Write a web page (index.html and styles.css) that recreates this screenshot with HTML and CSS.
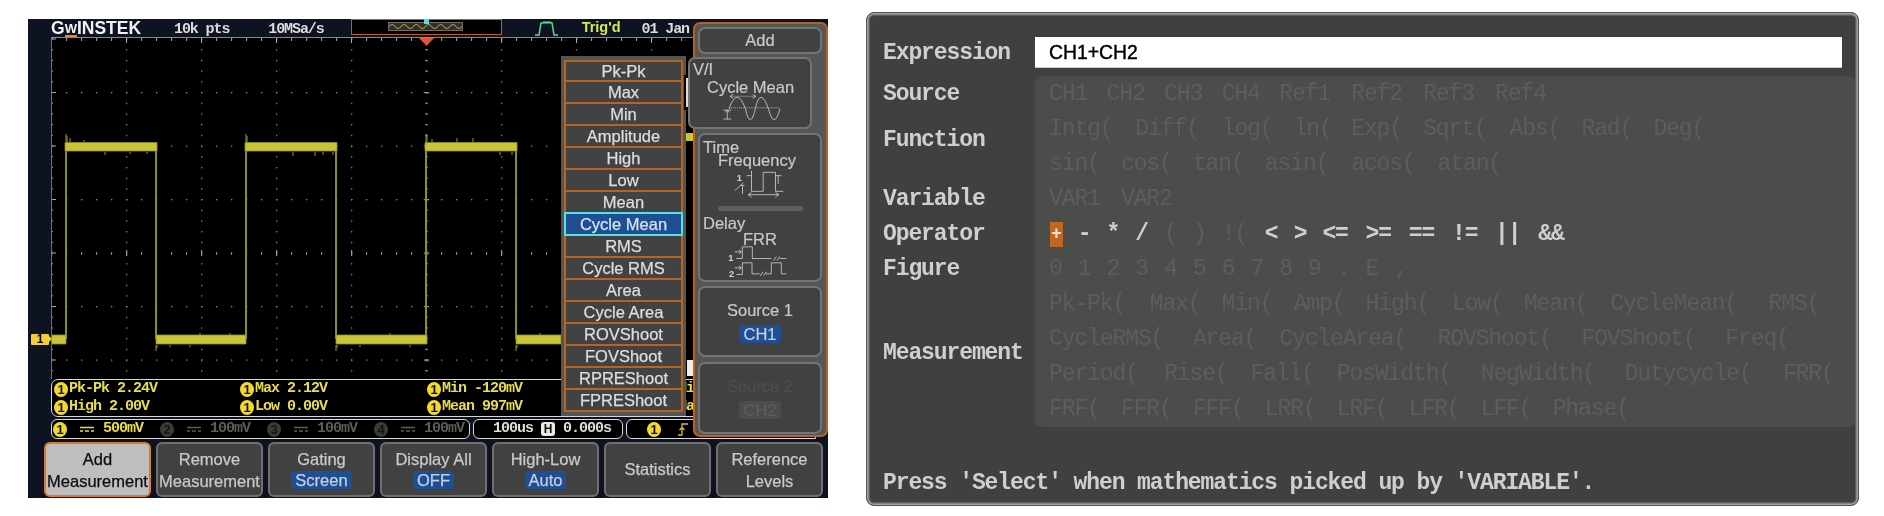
FILE: index.html
```html
<!DOCTYPE html>
<html lang="en">
<head>
<meta charset="utf-8">
<title>Math measurement</title>
<link rel="stylesheet" href="styles.css">
</head>
<body>
<main class="page">
  <section class="scope">
    <header class="topbar">
      <span class="logo">G<span class="logo-w">W</span>INSTEK</span>
      <span class="top-text pts">10k pts</span>
      <span class="top-text rate">10MSa/s</span>
      <div class="membar">
        <div class="memwin">
          <svg class="memwave" viewBox="0 0 72 6"><path d="M0 3q3-4 6 0t6 0 6 0 6 0 6 0 6 0 6 0 6 0 6 0 6 0 6 0 6 0"/></svg>
          <span class="memtrig"></span>
        </div>
      </div>
      <svg class="pulse" viewBox="0 0 23 15"><path d="M0 14H4L6 2H8L9 1 10 2 11 1 12 2 13 1 14 2 15 1 16 2H17L19 14H23"/></svg>
      <span class="trigd">Trig'd</span>
      <span class="top-text date">01 Jan</span>
    </header>

    <div class="plot">
      <svg class="plot-svg" viewBox="51 37 777 342">
        <defs>
          <pattern id="dotsH" x="51" y="38.5" width="15" height="53.5" patternUnits="userSpaceOnUse"><rect width="1.3" height="1.3" fill="#8c8c8c"/></pattern>
          <pattern id="dotsV" x="51" y="38.5" width="75" height="10.7" patternUnits="userSpaceOnUse"><rect width="1.3" height="1.3" fill="#8c8c8c"/></pattern>
          <pattern id="ticksTop" x="51" y="38" width="15" height="10" patternUnits="userSpaceOnUse"><rect width="1" height="3" fill="#999"/></pattern>
          <pattern id="majorTop" x="51" y="38" width="75" height="10" patternUnits="userSpaceOnUse"><rect width="1" height="5" fill="#aaa"/></pattern>
          <pattern id="ticksLeft" x="51" y="38.5" width="10" height="10.7" patternUnits="userSpaceOnUse"><rect width="2" height="1" fill="#999"/></pattern>
          <pattern id="majorLeft" x="51" y="38.5" width="10" height="53.5" patternUnits="userSpaceOnUse"><rect width="5" height="1" fill="#aaa"/></pattern>
          <pattern id="ticksAxis" x="425" y="38.5" width="10" height="10.7" patternUnits="userSpaceOnUse"><rect width="3" height="1" fill="#888"/></pattern>
          <pattern id="majorAxis" x="423.500" y="38.5" width="10" height="53.5" patternUnits="userSpaceOnUse"><rect width="6" height="1.2" fill="#999"/></pattern>
          <pattern id="ticksMid" x="51" y="252" width="15" height="10" patternUnits="userSpaceOnUse"><rect width="1" height="3" fill="#888"/></pattern>
          <pattern id="majorMid" x="51" y="250" width="75" height="10" patternUnits="userSpaceOnUse"><rect width="1.2" height="6" fill="#999"/></pattern>
        </defs>
        <rect x="51" y="37" width="777" height="342" fill="url(#dotsH)"/>
        <rect x="51" y="37" width="777" height="342" fill="url(#dotsV)"/>
        <rect x="51" y="38" width="777" height="5" fill="url(#ticksTop)"/>
        <rect x="51" y="38" width="777" height="6" fill="url(#majorTop)"/>
        <rect x="51" y="38" width="2" height="341" fill="url(#ticksLeft)"/>
        <rect x="51" y="38" width="5" height="341" fill="url(#majorLeft)"/>
        <rect x="425" y="38" width="3" height="341" fill="url(#ticksAxis)"/>
        <rect x="423.500" y="38" width="6" height="341" fill="url(#majorAxis)"/>
        <rect x="51" y="252" width="777" height="3" fill="url(#ticksMid)"/>
        <rect x="51" y="250" width="777" height="6" fill="url(#majorMid)"/>

        <path class="edge" d="M66 147V339M156 147V339M246 147V339M336 147V339M426 147V339M516 147V339"/>
        <path class="band" d="M65 142.500H157V151H65ZM245 142.500H337V151H245ZM425 142.500H517V151H425Z"/>
        <path class="band" d="M51 335H66V344H51ZM156 335H246V344H156ZM336 335H427V344H336ZM516 335H561V344H516Z"/>
        <path class="noise" d="M66 134V142M67 136V142M70 138V142M84 140V142M105 152V155M130 152V154M147 152V154M246 134V142M247 136V142M293 152V156M315 152V156M323 152V155M333 152V155M426 134V142M427 136V142M432 139V142M457 138V142M473 138V142M500 152V155M512 152V155M156 345V351M157 345V348M336 345V351M337 345V348M516 345V351M517 345V348M200 333V335M230 333V335M390 333V335M540 333V335M170 345V347M190 345V347M360 345V347M410 345V347"/>
        <path class="trigmark" d="M419 38H434L426.5 46Z"/>
      </svg>
      <span class="ch-marker">1</span>
    </div>

    <div class="meas">
      <div class="m"><span class="dot">1</span>Pk-Pk 2.24V</div>
      <div class="m"><span class="dot">1</span>Max 2.12V</div>
      <div class="m"><span class="dot">1</span>Min -120mV</div>
      <div class="m"><span class="dot">1</span>Mid</div>
      <div class="m"><span class="dot">1</span>High 2.00V</div>
      <div class="m"><span class="dot">1</span>Low 0.00V</div>
      <div class="m"><span class="dot">1</span>Mean 997mV</div>
      <div class="m"><span class="dot">1</span>Max</div>
    </div>

    <div class="status">
      <div class="channels">
        <div class="ch"><span class="dot">1</span><svg class="dc" viewBox="0 0 14 7"><path d="M0 1.500H14M0 5H3M5 5H9M11 5H14"/></svg><span class="val">500mV</span></div>
        <div class="ch off"><span class="dot">2</span><svg class="dc" viewBox="0 0 14 7"><path d="M0 1.500H14M0 5H3M5 5H9M11 5H14"/></svg><span class="val">100mV</span></div>
        <div class="ch off"><span class="dot">3</span><svg class="dc" viewBox="0 0 14 7"><path d="M0 1.500H14M0 5H3M5 5H9M11 5H14"/></svg><span class="val">100mV</span></div>
        <div class="ch off"><span class="dot">4</span><svg class="dc" viewBox="0 0 14 7"><path d="M0 1.500H14M0 5H3M5 5H9M11 5H14"/></svg><span class="val">100mV</span></div>
      </div>
      <div class="timebox"><span>100us</span><span class="hbox">H</span><span>0.000s</span></div>
      <div class="trigbox"><span class="dot">1</span><svg class="edge-icon" viewBox="0 0 10 13"><path d="M0 12H4V1H10M1.500 7L4 4.500 6.500 7"/></svg></div>
    </div>

    <nav class="softkeys">
      <div class="key active">Add<br>Measurement</div>
      <div class="key">Remove<br>Measurement</div>
      <div class="key">Gating<span class="badge">Screen</span></div>
      <div class="key">Display All<span class="badge">OFF</span></div>
      <div class="key">High-Low<span class="badge">Auto</span></div>
      <div class="key stat">Statistics</div>
      <div class="key">Reference<br>Levels</div>
    </nav>

    <ul class="popup">
      <li>Pk-Pk</li><li>Max</li><li>Min</li><li>Amplitude</li><li>High</li><li>Low</li><li>Mean</li>
      <li class="sel">Cycle Mean</li>
      <li>RMS</li><li>Cycle RMS</li><li>Area</li><li>Cycle Area</li><li>ROVShoot</li><li>FOVShoot</li><li>RPREShoot</li><li>FPREShoot</li>
    </ul>

    <span class="scroll-mark"></span>
    <span class="yellow-mark"></span>
    <span class="white-mark"></span>

    <aside class="menu">
      <div class="mbtn add">Add</div>
      <div class="mbtn vi">
        <div class="group-title">V/I</div>
        <div class="item-title cm">Cycle Mean</div>
        <svg class="icon icon-sine" viewBox="105 120 180 85">
          <path d="M125 162H280" stroke-dasharray="3 3"/>
          <path d="M130 127H205" stroke-dasharray="3 3"/>
          <path d="M138 121L128 127 138 133M197 121L207 127 197 133"/>
          <path d="M125 165Q150 95 175 165Q190 231 205 165Q220 95 245 165Q262 231 280 165"/>
          <path d="M108 169H132M120 169V196M108 196H132M114 176L120 169 126 176"/>
        </svg>
      </div>
      <div class="mbtn time">
        <div class="group-title">Time</div>
        <div class="item-title freq">Frequency</div>
        <svg class="icon icon-freq" viewBox="135 15 155 90">
          <path d="M175 35H190M190 20V82H225V25H262V82H285M262 35H280M270 35V60"/>
          <path d="M180 92H272M190 85L180 92 190 99M262 85L272 92 262 99"/>
          <path d="M140 80L166 56M157 64H169M163 64V90"/>
          <text x="146" y="50">1</text>
        </svg>
        <div class="divider"></div>
        <div class="group-title delay">Delay</div>
        <div class="item-title frr">FRR</div>
        <svg class="icon icon-frr" viewBox="125 245 180 95">
          <path d="M150 285H168V250H198V285H255M280 285H300M262 291L270 279M272 291L280 279"/>
          <path d="M145 265H165M158 259L165 265 158 271"/>
          <path d="M150 333H168V298H197V331H220M238 331H255V298H285V331H300M222 337L230 325M232 337L240 325"/>
          <path d="M145 313H165M158 307L165 313 158 319"/>
          <text x="126" y="291">1</text>
          <text x="128" y="339">2</text>
        </svg>
      </div>
      <div class="mbtn source">
        <span>Source 1</span><span class="badge">CH1</span>
      </div>
      <div class="mbtn source disabled">
        <span>Source 2</span><span class="badge">CH2</span>
      </div>
    </aside>
  </section>

  <section class="panel">
    <div class="head">
      <div class="label">Expression</div>
      <div class="input">CH1+CH2</div>
    </div>
    <div class="body">
      <div class="labels">
        <div class="label">Source</div>
        <div class="label l-func">Function</div>
        <div class="label">Variable</div>
        <div class="label">Operator</div>
        <div class="label">Figure</div>
        <div class="label l-meas">Measurement</div>
      </div>
      <div class="pane">
        <div class="row"><span class="s4">CH1</span><span class="s4">CH2</span><span class="s4">CH3</span><span class="s4">CH4</span><span class="s5">Ref1</span><span class="s5">Ref2</span><span class="s5">Ref3</span><span class="s5">Ref4</span></div>
        <div class="row"><span class="s6">Intg(</span><span class="s6">Diff(</span><span class="s5">log(</span><span class="s4">ln(</span><span class="s5">Exp(</span><span class="s6">Sqrt(</span><span class="s5">Abs(</span><span class="s5">Rad(</span><span class="s5">Deg(</span></div>
        <div class="row"><span class="s5">sin(</span><span class="s5">cos(</span><span class="s5">tan(</span><span class="s6">asin(</span><span class="s6">acos(</span><span class="s6">atan(</span></div>
        <div class="row"><span class="s5">VAR1</span><span class="s5">VAR2</span></div>
        <div class="row ops"><span class="s2"><b class="pick">+</b></span><span class="s2">-</span><span class="s2">*</span><span class="s2">/</span><span class="s2 dim">(</span><span class="s2 dim">)</span><span class="s3 dim">!(</span><span class="s2">&lt;</span><span class="s2">&gt;</span><span class="s3">&lt;=</span><span class="s3">&gt;=</span><span class="s3">==</span><span class="s3">!=</span><span class="s3">||</span><span class="s3">&amp;&amp;</span></div>
        <div class="row"><span class="s2">0</span><span class="s2">1</span><span class="s2">2</span><span class="s2">3</span><span class="s2">4</span><span class="s2">5</span><span class="s2">6</span><span class="s2">7</span><span class="s2">8</span><span class="s2">9</span><span class="s2">.</span><span class="s2">E</span><span class="s2">,</span></div>
        <div class="row"><span class="s7">Pk-Pk(</span><span class="s5">Max(</span><span class="s5">Min(</span><span class="s5">Amp(</span><span class="s6">High(</span><span class="s5">Low(</span><span class="s6">Mean(</span><span class="s11">CycleMean(</span><span class="s5">RMS(</span></div>
        <div class="row"><span class="s10">CycleRMS(</span><span class="s6">Area(</span><span class="s11">CycleArea(</span><span class="s10">ROVShoot(</span><span class="s10">FOVShoot(</span><span class="s6">Freq(</span></div>
        <div class="row"><span class="s8">Period(</span><span class="s6">Rise(</span><span class="s6">Fall(</span><span class="s10">PosWidth(</span><span class="s10">NegWidth(</span><span class="s11">Dutycycle(</span><span class="s5">FRR(</span></div>
        <div class="row"><span class="s5">FRF(</span><span class="s5">FFR(</span><span class="s5">FFF(</span><span class="s5">LRR(</span><span class="s5">LRF(</span><span class="s5">LFR(</span><span class="s5">LFF(</span><span class="s7">Phase(</span></div>
      </div>
    </div>
    <div class="label hint">Press 'Select' when mathematics picked up by 'VARIABLE'.</div>
  </section>
</main>
</body>
</html>
```
FILE: styles.css
```css
* { box-sizing: border-box; }
html, body { margin: 0; padding: 0; background: #fff; }
body { width: 1884px; height: 516px; overflow: hidden; }

.page {
  display: flex;
  align-items: flex-start;
  padding: 12px 0 0 28px;
  font-family: "Liberation Sans", Arial, sans-serif;
}

/* ---------- oscilloscope ---------- */
.scope {
  position: relative;
  flex: none;
  width: 800px;
  height: 479px;
  margin-top: 7px;
  background: #0e1322;
  overflow: hidden;
  filter: blur(0.45px);
}
.topbar {
  display: flex;
  align-items: center;
  height: 18px;
  padding-left: 23px;
  color: #dcdcdc;
}
.logo {
  flex: none;
  width: 90px;
  font-size: 17.500px;
  font-weight: 700;
  color: #f2f2f2;
  line-height: 18px;
  white-space: nowrap;
}
.logo-w {
  display: inline-block;
  font-size: 13px;
  line-height: 12px;
  height: 14px;
  vertical-align: 1px;
  border-bottom: 2px solid #e8862e;
}
.top-text {
  font: 700 15px/18px "Liberation Mono", monospace;
  letter-spacing: -1.100px;
  white-space: nowrap;
  padding-top: 4px;
}
.pts { margin-left: 33px; }
.rate { margin-left: 39px; }
.membar {
  flex: none;
  width: 151px;
  height: 16px;
  margin: 0 0 3px 27px;
  padding: 2px 0 0 36px;
  border: 1px solid #b8601c;
  background: #000;
}
.memwin {
  position: relative;
  width: 75px;
  height: 9px;
  background: #2e2e2e;
  border: 1px solid #6e6e6e;
}
.memwave { display: block; width: 73px; height: 7px; }
.memwave path { fill: none; stroke: #b39a24; stroke-width: 1; }
.memtrig {
  position: absolute;
  left: 35px;
  top: -4px;
  width: 5px;
  height: 5px;
  background: #57d8e4;
}
.pulse { flex: none; width: 23px; height: 15px; margin: 0 0 0 33px; fill: none; stroke: #63d68c; stroke-width: 1.500; }
.trigd {
  margin-left: 24px;
  font-size: 14.500px;
  font-weight: 700;
  line-height: 18px;
  color: #d6ea50;
  white-space: nowrap;
  position: relative;
  top: -1px;
}
.date { margin-left: 21px; }

.plot {
  position: relative;
  height: 342px;
  margin-left: 23px;
  background: #000;
  border-top: 1px solid #8a8a8a;
}
.plot-svg { display: block; width: 777px; height: 342px; margin-top: -1px; }
.plot::before {
  content: "";
  position: absolute;
  left: 0; top: 0; bottom: 0;
  width: 1px;
  background: #6e6e6e;
}
.edge { fill: none; stroke: #8f8d28; stroke-width: 2; }
.band { fill: #c8c537; stroke: #8f8d28; stroke-width: 0.800; }
.noise { fill: none; stroke: #9d9b2c; stroke-width: 1; }
.trigmark { fill: #e6552b; }
.ch-marker {
  position: absolute;
  left: -20px;
  top: 296px;
  width: 18px;
  height: 11px;
  background: #f0cf3a;
  color: #000;
  font: 700 12px/11px "Liberation Sans", sans-serif;
  text-align: center;
  border-radius: 1px;
}
.ch-marker::after {
  content: "";
  position: absolute;
  left: 18px;
  top: 2px;
  border-left: 3px solid #f0cf3a;
  border-top: 3.500px solid transparent;
  border-bottom: 3.500px solid transparent;
}

.dot {
  flex: none;
  display: inline-block;
  width: 14px;
  height: 15px;
  border-radius: 50%;
  background: #f2d92f;
  color: #111;
  font: 700 13px/15px "Liberation Sans", sans-serif;
  letter-spacing: 0;
  text-align: center;
}

.meas {
  display: grid;
  grid-template-columns: 186px 187px 236px 1fr;
  grid-auto-rows: 18px;
  width: 777px;
  height: 38px;
  margin-left: 23px;
  padding: 0 0 0 2px;
  background: #000;
  border: 1px solid #d9d9d9;
  border-radius: 7px;
}
.m {
  display: flex;
  align-items: center;
  gap: 1px;
  font: 700 15px/18px "Liberation Mono", monospace;
  letter-spacing: -1px;
  color: #e6dc4c;
  white-space: pre;
}

.status {
  display: flex;
  gap: 3px;
  height: 20px;
  margin: 2px 0 0 23px;
  font: 700 15px/18px "Liberation Mono", monospace;
  letter-spacing: -1px;
}
.channels, .timebox, .trigbox {
  display: flex;
  align-items: center;
  background: #000;
  border: 1px solid #d9d9d9;
  border-radius: 6px;
}
.channels { width: 419px; padding-left: 1px; flex: none; }
.ch {
  flex: none;
  width: 107px;
  display: flex;
  align-items: center;
  color: #e6dc4c;
}
.ch.off { color: #5c5c5c; }
.ch.off .dot { background: #3a3a3a; color: #151515; }
.dc { width: 14px; height: 7px; margin-left: 13px; fill: none; stroke: currentColor; stroke-width: 1.500; }
.val { margin-left: 9px; }
.timebox { width: 150px; padding-left: 19px; color: #dedede; flex: none; }
.hbox {
  width: 14px;
  height: 14px;
  margin: 0 8px;
  background: #e8e8e8;
  color: #111;
  border-radius: 3px;
  font: 700 12px/14px "Liberation Sans", sans-serif;
  letter-spacing: 0;
  text-align: center;
}
.trigbox { width: 190px; padding-left: 20px; border-radius: 6px 0 0 6px; flex: none; }
.edge-icon { width: 10px; height: 13px; margin-left: 17px; fill: none; stroke: #e0b93a; stroke-width: 1.300; }

.softkeys {
  display: flex;
  gap: 5px;
  height: 55px;
  margin: 3px 0 0 16px;
}
.key {
  flex: none;
  width: 107px;
  height: 55px;
  padding-top: 4px;
  background: #414141;
  border: 2px solid #707070;
  border-radius: 6px;
  color: #c9c9c9;
  font-size: 16.500px;
  -webkit-text-stroke: 0.25px currentColor;
  line-height: 22px;
  text-align: center;
  white-space: nowrap;
  overflow: visible;
}
.key.active {
  background: #bebebe;
  border-color: #dc7a28;
  color: #0c0c0c;
}
.key.stat { padding-top: 14px; }
.badge {
  display: table;
  margin: 1px auto 0;
  padding: 0 4px;
  height: 18px;
  line-height: 18px;
  background: #1e4e93;
  border-radius: 4px;
  color: #c6d0dd;
}

/* list of measurements */
.popup {
  position: absolute;
  left: 533px;
  top: 37px;
  width: 125px;
  height: 360px;
  margin: 0;
  padding: 4px 3px;
  list-style: none;
  background: #555;
}
.popup li {
  height: 22px;
  background: #424242;
  border: 2px solid #b5651f;
  border-top-width: 0;
  color: #dedede;
  font-size: 16.500px;
  -webkit-text-stroke: 0.25px currentColor;
  line-height: 20px;
  text-align: center;
  white-space: nowrap;
}
.popup li:first-child { border-top-width: 2px; line-height: 19px; }
.popup li.sel {
  position: relative;
  height: 24px;
  margin: -2px 0 0;
  background: #1e4f92;
  border: 2px solid #55dfe8;
  color: #d7e2ee;
  line-height: 20px;
}

.scroll-mark {
  position: absolute;
  left: 656px; top: 56px;
  width: 6px; height: 35px;
  background: #000;
  border-left: 2px solid #000;
}
.scroll-mark::after {
  content: "";
  position: absolute;
  left: 0; top: 3px; bottom: 3px;
  width: 2px;
  background: #ddd;
}
.yellow-mark {
  position: absolute;
  left: 658px; top: 114px;
  width: 8px; height: 8px;
  background: #c9c537;
}
.white-mark {
  position: absolute;
  left: 659px; top: 341px;
  width: 7px; height: 16px;
  background: #ededed;
}

/* right hand menu */
.menu {
  position: absolute;
  left: 665px;
  top: 3px;
  width: 135px;
  height: 415px;
  padding: 3px;
  background: #565656;
  border: 2px solid #b8621e;
  border-radius: 7px;
  color: #c9c9c9;
}
.mbtn {
  position: relative;
  width: 124px;
  background: #414141;
  border: 2px solid #747474;
  border-radius: 7px;
  font-size: 16.500px;
  -webkit-text-stroke: 0.2px currentColor;
}
.add { height: 27px; line-height: 23px; text-align: center; }
.vi { height: 72px; margin: 3px 0 0 -10px; padding-top: 2px; }
.time { height: 149px; margin-top: 4px; padding-top: 4px; }
.group-title { padding-left: 3px; line-height: 16px; }
.item-title { white-space: nowrap; line-height: 18px; }
.cm { margin: 1px 0 0 17px; }
.freq { margin: -4px 0 0 18px; }
.frr { margin: -1px 0 0 43px; }
.icon { display: block; fill: none; stroke: #c9c9c9; stroke-width: 2.600; -webkit-text-stroke: 0; }
.icon text { fill: #d4d4d4; stroke: none; font: 700 28px "Liberation Sans", sans-serif; }
.icon-sine { width: 60px; height: 28px; margin: -2px 0 0 32px; }
.icon-freq { width: 52px; height: 30px; margin: 0 0 0 33px; }
.divider {
  width: 85px;
  height: 5px;
  margin: 7px 0 4px 18px;
  background: #5f5f5f;
  border-radius: 3px;
}
.icon-frr { width: 60px; height: 32px; margin: -3px 0 0 28px; }
.source {
  display: flex;
  flex-direction: column;
  align-items: center;
  height: 71px;
  margin-top: 4px;
  padding-top: 10px;
  line-height: 24px;
}
.source .badge { margin-top: 3px; }
.disabled { height: 72px; margin-top: 5px; color: #4e4e4e; }
.disabled .badge { background: #4c4c4c; color: #5e5e5e; }

/* ---------- math panel ---------- */
.panel {
  flex: none;
  width: 993px;
  height: 494px;
  margin-left: 38px;
  padding: 24px 16px 0;
  background: #404040;
  border: 1px solid #505050;
  border-radius: 8px;
  box-shadow: inset 0 0 0 1.500px #a4a4a4, inset 0 0 0 3px #5e5e5e;
  font: 23px/24px "Liberation Mono", monospace;
  letter-spacing: -1.100px;
  filter: blur(0.4px);
}
.label { font-weight: 700; color: #cfcfcf; white-space: nowrap; }
.head { display: flex; align-items: center; height: 31px; }
.head .label { width: 152px; flex: none; }
.input {
  flex: 1;
  height: 31px;
  padding-left: 14px;
  background: #fff;
  border-bottom: 1px solid #ccc;
  color: #000;
  font: 400 19.400px/31px "Liberation Sans", sans-serif;
  letter-spacing: 0;
  -webkit-text-stroke: 0.4px #000;
}
.body { display: flex; margin-top: 8px; }
.labels {
  flex: none;
  width: 152px;
  display: grid;
  grid-template-rows: repeat(10, 35.100px);
  align-items: center;
}
.l-func { grid-row: span 2; padding-bottom: 12px; }
.l-meas { grid-row: span 4; padding-bottom: 8px; }
.pane {
  flex: 1;
  height: 351px;
  padding-left: 14px;
  background: #4c4d4a;
  border-radius: 7px;
  color: #5d5e5b;
}
.row {
  display: grid;
  grid-template-columns: repeat(56, 14.400px);
  align-items: center;
  height: 35.100px;
  white-space: nowrap;
}
.ops { color: #cfcfcf; font-weight: 700; }
.ops .dim { color: #5d5e5b; font-weight: 400; }
.pick {
  display: inline-block;
  width: 13px;
  height: 25px;
  margin-left: 1px;
  background: #c0661f;
  color: #f2e4d4;
  font-size: 18px;
  line-height: 25px;
  letter-spacing: 0;
  text-align: center;
}
.s2 { grid-column: span 2; }
.s3 { grid-column: span 3; }
.s4 { grid-column: span 4; }
.s5 { grid-column: span 5; }
.s6 { grid-column: span 6; }
.s7 { grid-column: span 7; }
.s8 { grid-column: span 8; }
.s10 { grid-column: span 10; }
.s11 { grid-column: span 11; }
.hint { margin-top: 44px; }
```
